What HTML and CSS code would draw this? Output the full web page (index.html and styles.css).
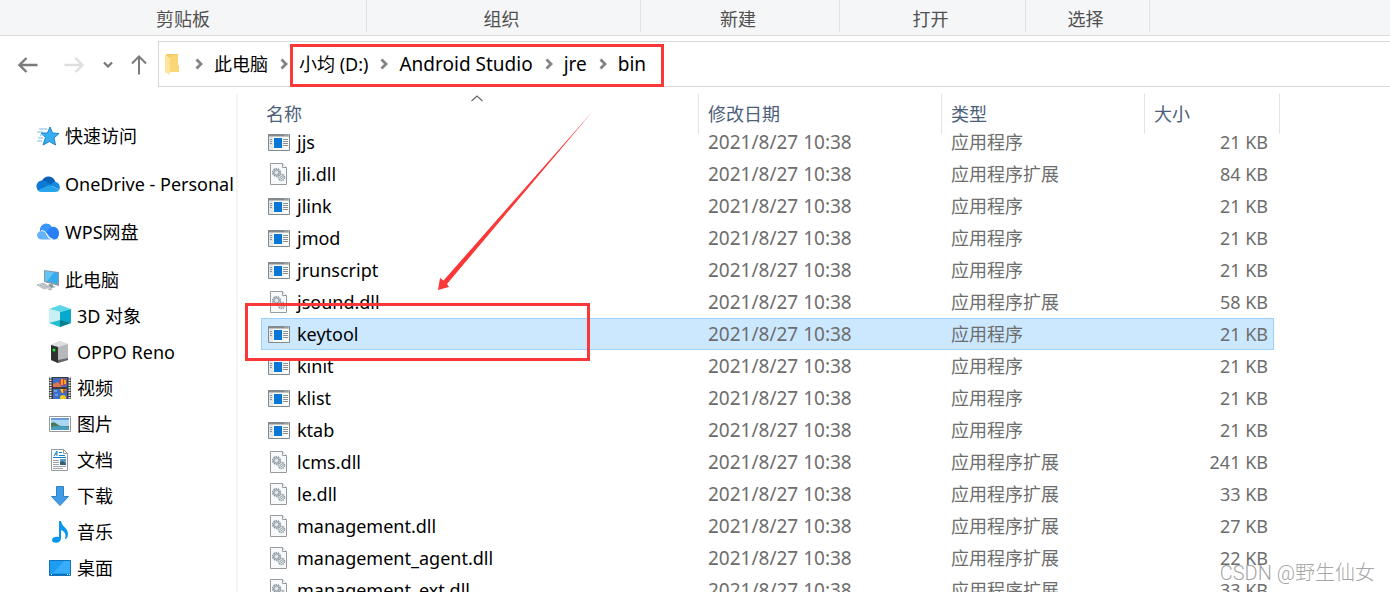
FILE: index.html
```html
<!DOCTYPE html>
<html lang="zh-CN">
<head>
<meta charset="utf-8">
<title>bin</title>
<link rel="stylesheet" href="styles.css">
</head>
<body>
<svg class="defs" aria-hidden="true">
  <symbol id="chev" viewBox="0 0 8 12"><path d="M1.500 1.500L6 6L1.500 10.500" fill="none" stroke="#838383" stroke-width="2.800"/></symbol>
  <symbol id="exe" viewBox="0 0 22 17">
    <path d="M.5 .5H21.500V16.500H.5Z" fill="#fafafa" stroke="#84898d"/>
    <path d="M0 0H22V2.500H0Z" fill="#84898d"/>
    <path d="M16.500 1H17.500M18.500 1H19.500M20 1H21" stroke="#dfe2e4"/>
    <path d="M1 3H5V16H1Z" fill="#e4e7e9"/>
    <path d="M2 5.500H4M2 7.500H4M2 9.500H4M15 5.500H20M15 7.500H20M15 9.500H20M15 11.500H20" stroke="#8d9296"/>
    <path d="M6 4H14V14H6Z" fill="#0578d7"/>
  </symbol>
  <symbol id="dll" viewBox="0 0 17 22">
    <path d="M.5 .5H12.500L16.500 4.500V21.500H.5Z" fill="#f8f9fa" stroke="#989b9d"/>
    <path d="M12.500 .5V4.500H16.500" fill="#fff" stroke="#989b9d"/>
    <circle cx="6.500" cy="9.500" r="3.700" fill="#dfe5e9" stroke="#8f9ba4" stroke-width="1.800" stroke-dasharray="1.500 .8"/>
    <circle cx="6.500" cy="9.500" r="2.500" fill="none" stroke="#8f9ba4"/>
    <circle cx="11.500" cy="14.500" r="3" fill="#dfe5e9" stroke="#8f9ba4" stroke-width="1.600" stroke-dasharray="1.300 .8"/>
    <circle cx="11.500" cy="14.500" r="1" fill="#fff" stroke="#8f9ba4"/>
  </symbol>
</svg>

<header class="ribbon">
  <div class="group">剪贴板</div><div class="group">组织</div><div class="group">新建</div><div class="group">打开</div><div class="group">选择</div>
</header>

<nav class="toolbar">
  <div class="moves">
    <button aria-label="后退"><svg width="20" height="16" viewBox="0 0 20 16"><path d="M19.500 8H2M8.500 1L1.500 8L8.500 15" fill="none" stroke="#7b7b7b" stroke-width="2.400"/></svg></button>
    <button aria-label="前进"><svg width="20" height="16" viewBox="0 0 20 16"><path d="M.5 8H18M11.500 1L18.500 8L11.500 15" fill="none" stroke="#dedede" stroke-width="2.400"/></svg></button>
    <button class="recent" aria-label="最近位置"><svg width="10" height="8" viewBox="0 0 10 8"><path d="M1 1.500L5 5.500L9 1.500" fill="none" stroke="#767676" stroke-width="2.200"/></svg></button>
    <button aria-label="上移"><svg width="16" height="20" viewBox="0 0 16 20"><path d="M8 19.500V2M1 8.500L8 1.500L15 8.500" fill="none" stroke="#7b7b7b" stroke-width="2"/></svg></button>
  </div>
  <div class="address">
    <svg class="folder" width="14" height="21" viewBox="0 0 14 21"><path d="M1 0H13V11L14 12V18H1Z" fill="#f5cd68"/><path d="M0 1L5 4V21L0 18Z" fill="#ffe49b"/><path d="M5 3L13 0V11L14 12V18H5Z" fill="#f9d777"/></svg>
    <svg class="chev"><use href="#chev"/></svg><button class="crumb">此电脑</button>
    <svg class="chev"><use href="#chev"/></svg><button class="crumb">小均 (D:)</button>
    <svg class="chev"><use href="#chev"/></svg><button class="crumb latin">Android Studio</button>
    <svg class="chev"><use href="#chev"/></svg><button class="crumb latin">jre</button>
    <svg class="chev"><use href="#chev"/></svg><button class="crumb latin">bin</button>
  </div>
</nav>

<main class="content">
  <aside class="tree">
    <a class="node root" href="#"><svg viewBox="0 0 24 24"><path d="M14 3L16.500 9L23 9.500L18 14L19.500 21L13.500 17.500L7 21L9.500 13.500L5 9L11.500 9Z" fill="#36aef0" stroke="#1b83cb"/><path d="M3 5H11M1 8H7M4 11H8M2 14H7M1 17H6" stroke="#76bce8" stroke-width="1"/></svg>快速访问</a>
    <a class="node root" href="#"><svg viewBox="0 0 24 24"><path d="M6 9C8 3 17 2.500 19.500 10L13 14Z" fill="#0a5fb8"/><path d="M2 18.500C-1.500 14 1.500 8 7 8.500Q9 8.600 10.500 9.700L17 13.500L4 19.500Z" fill="#0d79d3"/><path d="M14 13L17 10.500C20 9 25 11.500 23.500 17.500Z" fill="#168ae0"/><path d="M1.800 18.200L13.500 13L23.500 17.500Q22.500 20 19 20H5.500Q3 20 1.800 18.200Z" fill="#27a5ec"/></svg>OneDrive - Personal</a>
    <a class="node root" href="#"><svg viewBox="0 0 24 24"><path d="M4 11C4 3 13 1.500 15.500 7C20 6 23.500 9.500 23 14Q22.500 19.500 18 19.500C14 19.500 12 16 10 13Z" fill="#2780f5"/><path d="M4 11C4 3 13 1.500 15.500 7Q12 9 10 13Q8 10 4 11Z" fill="#3a96f8"/><path d="M1 15A5 5 0 0 1 9 12C11 15 12 19.500 16 19.500H6A5 5 0 0 1 1 15Z" fill="#65b4fb"/><path d="M5 10.500Q9 10 11 14T17 19.500" fill="none" stroke="#fff" stroke-width=".9"/></svg>WPS网盘</a>
    <a class="node root" href="#"><svg viewBox="0 0 24 24"><path d="M8 2L23 4V18L8 14Z" fill="#8b9ba6"/><path d="M9 3L22 5V16L9 12.700Z" fill="#36abf0"/><path d="M9 3L18 4.500L11 13.200L9 12.700Z" fill="#65c4f6"/><path d="M14 16L17 16.500V18L20 19L15 20L12 17Z" fill="#8d979e"/><path d="M1 17L7 15L14 19L8 21Z" fill="#d4d9dc" stroke="#a5adb2" stroke-width=".7"/><path d="M4 17L10 20M6 16L12 19" stroke="#949ea5" stroke-width=".7"/><path d="M11 21L14 20L17 21L14 22.500Z" fill="#aeb6bb"/></svg>此电脑</a>
    <a class="node" href="#"><svg viewBox="0 0 22 22"><path d="M0 4L11 0L22 4L11 7Z" fill="#5bd6e6"/><path d="M0 4L11 7V16L0 18Z" fill="#c9f1f4"/><path d="M22 4L11 7V16L22 18Z" fill="#08a8cf"/><path d="M0 18L11 15L22 18L11 22Z" fill="#22bdd0"/><path d="M11 15L22 18L11 22Z" fill="#087e91"/></svg>3D 对象</a>
    <a class="node" href="#"><svg viewBox="0 0 22 22"><path d="M2 4L11 0L19 3V19L9 22L2 19Z" fill="#b6b8bc"/><path d="M2 4L11 0L19 3L9 6Z" fill="#dfe0e1"/><path d="M2 4L9 6V22L2 19Z" fill="#303232"/><path d="M9 19L19 17V19L9 22Z" fill="#64676c"/><circle cx="5" cy="9" r="1.500" fill="#24ec36"/></svg>OPPO Reno</a>
    <a class="node" href="#"><svg viewBox="0 0 22 22"><path d="M0 0H22V22H0Z" fill="#3d3b3b"/><path d="M1.500 0V22M20.500 0V22" stroke="#e8e8e8" stroke-width="2" stroke-dasharray="1.500 1"/><path d="M4 1H18V10H4ZM4 12H18V22H4Z" fill="#3c6dc9"/><path d="M4 7L9 5L13 10H4Z" fill="#e27351"/><circle cx="14" cy="5" r="3.500" fill="#db3730"/><path d="M13 2V8M16 3V7" stroke="#f4cf25" stroke-width="1.500"/><path d="M11 12H17L15 16H13Z" fill="#f2c91e"/><path d="M15 12V16" stroke="#cf292b" stroke-width="1.500"/><circle cx="14" cy="21" r="3" fill="#f2c91e"/><path d="M5 14H8M6 18H9" stroke="#a7caf2"/></svg>视频</a>
    <a class="node" href="#"><svg viewBox="0 0 22 22"><path d="M.5 3.500H21.500V18.500H.5Z" fill="#fff" stroke="#969b9f"/><path d="M2 5H20V17H2Z" fill="#a9d7f4"/><path d="M2 5H20V7H2Z" fill="#6b9ed8"/><path d="M2 10Q5 8 8 11T20 13V14H2Z" fill="#487b55"/><path d="M2 14Q9 12 20 14V17H2Z" fill="#4b9dbd"/></svg>图片</a>
    <a class="node" href="#"><svg viewBox="0 0 22 22"><path d="M2.500 .5H14.500L18.500 4.500V21.500H2.500Z" fill="#fff" stroke="#969b9f"/><path d="M14.500 .5V4.500H18.500" fill="none" stroke="#969b9f"/><path d="M5 7L8 2V7M6 5H8M10 3.500H13M10 6.500H16" fill="none" stroke="#1681cf"/><path d="M4 8.500H17" stroke="#1681cf"/><path d="M4 11.500H10M4 13.500H10M4 15.500H10M4 17.500H17M4 19.500H14" stroke="#a0a5a9"/><path d="M11 10H17V16H11Z" fill="#5e9bc5"/><path d="M11 13L14 12L17 15V16H11Z" fill="#315f73"/></svg>文档</a>
    <a class="node" href="#"><svg viewBox="0 0 22 22"><path d="M7.500 1.500H14.500V11.500H19.500L11 20.500L2.500 11.500H7.500Z" fill="#429be7" stroke="#2b83cc"/></svg>下载</a>
    <a class="node" href="#"><svg viewBox="0 0 22 22"><path d="M10 0H12C13 6 19 7 19 13Q19 16 17 18H16Q18 11 12 9V17C12 23 3 23 3 19C3 16 7 15 10 16Z" fill="#0796ed"/></svg>音乐</a>
    <a class="node" href="#"><svg viewBox="0 0 22 22"><path d="M.5 3.500H21.500V18.500H.5Z" fill="#1b9df2" stroke="#1273ba"/><path d="M15 4H21V16H4Z" fill="#38adfb"/><path d="M1 17H21V18H1Z" fill="#0870b8"/><path d="M2 17.500H3M18 17.500H19M20 17.500H21" stroke="#fff"/></svg>桌面</a>
  </aside>

  <table class="files">
    <thead><tr>
      <th class="name" scope="col">名称<svg class="sort" width="12" height="7" viewBox="0 0 12 7"><path d="M.5 6L6 1L11.500 6" fill="none" stroke="#666" stroke-width="1.200"/></svg></th>
      <th class="date" scope="col">修改日期</th><th class="type" scope="col">类型</th><th class="size" scope="col">大小</th>
    </tr></thead>
    <tbody>
      <tr><td><svg class="exe"><use href="#exe"/></svg>jjs</td><td>2021/8/27 10:38</td><td>应用程序</td><td>21 KB</td></tr>
      <tr><td><svg class="dll"><use href="#dll"/></svg>jli.dll</td><td>2021/8/27 10:38</td><td>应用程序扩展</td><td>84 KB</td></tr>
      <tr><td><svg class="exe"><use href="#exe"/></svg>jlink</td><td>2021/8/27 10:38</td><td>应用程序</td><td>21 KB</td></tr>
      <tr><td><svg class="exe"><use href="#exe"/></svg>jmod</td><td>2021/8/27 10:38</td><td>应用程序</td><td>21 KB</td></tr>
      <tr><td><svg class="exe"><use href="#exe"/></svg>jrunscript</td><td>2021/8/27 10:38</td><td>应用程序</td><td>21 KB</td></tr>
      <tr><td><svg class="dll"><use href="#dll"/></svg>jsound.dll</td><td>2021/8/27 10:38</td><td>应用程序扩展</td><td>58 KB</td></tr>
      <tr class="selected"><td><svg class="exe"><use href="#exe"/></svg>keytool</td><td>2021/8/27 10:38</td><td>应用程序</td><td>21 KB</td></tr>
      <tr><td><svg class="exe"><use href="#exe"/></svg>kinit</td><td>2021/8/27 10:38</td><td>应用程序</td><td>21 KB</td></tr>
      <tr><td><svg class="exe"><use href="#exe"/></svg>klist</td><td>2021/8/27 10:38</td><td>应用程序</td><td>21 KB</td></tr>
      <tr><td><svg class="exe"><use href="#exe"/></svg>ktab</td><td>2021/8/27 10:38</td><td>应用程序</td><td>21 KB</td></tr>
      <tr><td><svg class="dll"><use href="#dll"/></svg>lcms.dll</td><td>2021/8/27 10:38</td><td>应用程序扩展</td><td>241 KB</td></tr>
      <tr><td><svg class="dll"><use href="#dll"/></svg>le.dll</td><td>2021/8/27 10:38</td><td>应用程序扩展</td><td>33 KB</td></tr>
      <tr><td><svg class="dll"><use href="#dll"/></svg>management.dll</td><td>2021/8/27 10:38</td><td>应用程序扩展</td><td>27 KB</td></tr>
      <tr><td><svg class="dll"><use href="#dll"/></svg>management_agent.dll</td><td>2021/8/27 10:38</td><td>应用程序扩展</td><td>22 KB</td></tr>
      <tr><td><svg class="dll"><use href="#dll"/></svg>management_ext.dll</td><td>2021/8/27 10:38</td><td>应用程序扩展</td><td>33 KB</td></tr>
    </tbody>
  </table>
</main>

<div class="mark path-mark"></div>
<div class="mark file-mark"></div>
<svg class="arrow" width="160" height="184" viewBox="0 0 160 184"><path d="M1 182L3 170L6.500 172.500L156 3L10 176L12 179Z" fill="#fb3838"/></svg>
<div class="watermark">CSDN @野生仙女</div>
</body>
</html>
```

FILE: styles.css
```css
* { box-sizing: border-box; }

body {
  position: relative;
  display: flex;
  flex-direction: column;
  height: 100vh;
  margin: 0;
  overflow: hidden;
  background: #fff;
  color: #000;
  font: 18px/32px "Noto Sans", "Noto Sans CJK SC", sans-serif;
}

button {
  padding: 0;
  border: 0;
  background: none;
  color: inherit;
  font: inherit;
}

svg { display: block; flex: none; }
.defs { position: absolute; width: 0; height: 0; }

.ribbon {
  display: grid;
  flex: none;
  grid-template-columns: 367px 274px 199px 186px 124px;
  grid-template-rows: 100%;
  height: 36px;
  padding-bottom: 3px;
  border-bottom: 1px solid #d9dadb;
  background: #f5f6f7;
  color: #505050;
}
.group {
  padding-right: 4px;
  border-right: 1px solid #e1e2e3;
  line-height: 38px;
  text-align: center;
}
.group:first-child { padding-right: 0; }

.toolbar {
  display: flex;
  flex: none;
  height: 58px;
  padding: 5px 0 7px 18px;
}
.moves {
  display: flex;
  align-items: center;
  gap: 26px;
  width: 140px;
  padding-top: 1px;
}
.moves .recent { margin: 0 -8px 0 -7px; }
.address {
  display: flex;
  flex: 1;
  align-items: center;
  border: 1px solid #d9d9d9;
  border-right: 0;
  padding-left: 6px;
}
.folder { margin-right: 4px; }
.chev { width: 8px; height: 12px; margin: 0 11px 0 12px; }
.crumb { line-height: 30px; white-space: nowrap; }
.latin { font-size: 19px; }

.content {
  display: flex;
  flex: 1;
  min-height: 0;
}

.tree {
  flex: none;
  width: 238px;
  padding-top: 24px;
  border-right: 2px solid #f5f5f5;
  overflow: hidden;
}
.node {
  display: flex;
  align-items: center;
  gap: 6px;
  width: 234px;
  height: 36px;
  padding-left: 49px;
  overflow: hidden;
  color: #000;
  text-decoration: none;
  white-space: nowrap;
}
.node svg { width: 22px; height: 22px; }
.root { gap: 5px; margin-bottom: 12px; padding-left: 36px; }
.root svg { width: 24px; height: 24px; }
.root:nth-child(4) { margin-bottom: 0; }

.files {
  width: 1013px;
  height: max-content;
  margin-left: 23px;
  border-collapse: separate;
  border-spacing: 0;
  table-layout: fixed;
}
th {
  position: relative;
  height: 32px;
  padding: 8px 0 0 10px;
  color: #4c607a;
  font-weight: 400;
  line-height: 24px;
  text-align: left;
}
th::after {
  content: "";
  position: absolute;
  top: 0;
  right: -1px;
  width: 1px;
  height: 40px;
  background: #e3e3e3;
}
.name { width: 437px; padding-left: 5px; }
.date { width: 243px; }
.type { width: 203px; }
.size::after { right: -6px; }
.sort { position: absolute; top: 1px; left: 210px; }

td {
  height: 32px;
  padding: 0 0 0 10px;
  color: #6d6d6d;
  line-height: 32px;
  white-space: nowrap;
}
td:first-child {
  display: flex;
  align-items: center;
  padding-left: 7px;
  color: #000;
}
td:nth-child(2) { font-size: 19px; }
td:last-child { padding-right: 6px; text-align: right; }
.exe { width: 22px; height: 17px; margin-right: 7px; }
.dll { width: 17px; height: 22px; margin: 0 10px 0 2px; }
.selected td {
  background: #cce8ff;
  box-shadow: inset 0 1px #99d1ff, inset 0 -1px #99d1ff;
}
.selected td:first-child { box-shadow: inset 1px 1px #99d1ff, inset 0 -1px #99d1ff; }
.selected td:last-child { box-shadow: inset -1px -1px #99d1ff, inset 0 1px #99d1ff; }

.mark { position: absolute; border: 3px solid #fb3838; }
.path-mark { top: 44px; left: 290px; width: 374px; height: 43px; }
.file-mark { top: 303px; left: 245px; width: 345px; height: 58px; }
.arrow { position: absolute; top: 108px; left: 437px; }
.watermark {
  position: absolute;
  right: 15px;
  bottom: 4px;
  color: #8c8c8ccc;
  font: 300 20px/30px Roboto, "Noto Sans CJK SC", sans-serif;
  text-shadow: 1px 1px #ffffffcc;
}
```
